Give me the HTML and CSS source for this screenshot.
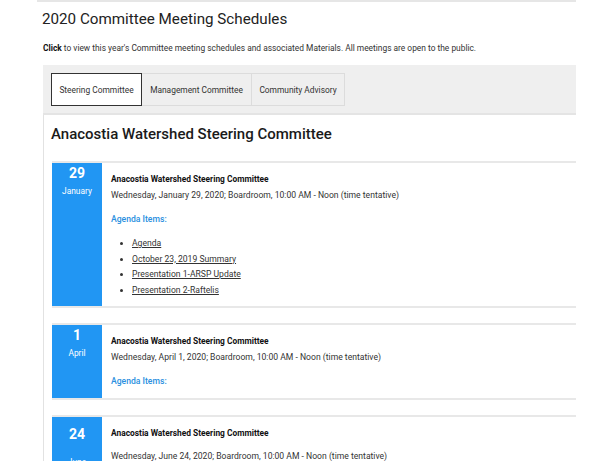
FILE: index.html
```html
<!DOCTYPE html>
<html lang="en">
<head>
<meta charset="utf-8">
<title>2020 Committee Meeting Schedules</title>
<link rel="stylesheet" href="styles.css">
</head>
<body>
<div class="topline"></div>
<main class="wrap">
  <h1 class="page-title">2020 Committee Meeting Schedules</h1>
  <p class="intro"><strong>Click</strong> to view this year's Committee meeting schedules and associated Materials. All meetings are open to the public.</p>

  <div class="tabs">
    <button class="tab tab--active">Steering Committee</button>
    <button class="tab">Management Committee</button>
    <button class="tab">Community Advisory</button>
  </div>

  <section class="panel">
    <h2 class="panel-title">Anacostia Watershed Steering Committee</h2>

    <article class="meeting">
      <div class="date">
        <div class="date-day">29</div>
        <div class="date-month">January</div>
      </div>
      <div class="meeting-body">
        <h3 class="meeting-title">Anacostia Watershed Steering Committee</h3>
        <p class="meeting-when">Wednesday, January 29, 2020; Boardroom, 10:00 AM - Noon (time tentative)</p>
        <p class="agenda-label">Agenda Items:</p>
        <ul class="agenda">
          <li><a href="#">Agenda</a></li>
          <li><a href="#">October 23, 2019 Summary</a></li>
          <li><a href="#">Presentation 1-ARSP Update</a></li>
          <li><a href="#">Presentation 2-Raftelis</a></li>
        </ul>
      </div>
    </article>

    <article class="meeting">
      <div class="date">
        <div class="date-day">1</div>
        <div class="date-month">April</div>
      </div>
      <div class="meeting-body">
        <h3 class="meeting-title">Anacostia Watershed Steering Committee</h3>
        <p class="meeting-when">Wednesday, April 1, 2020; Boardroom, 10:00 AM - Noon (time tentative)</p>
        <p class="agenda-label">Agenda Items:</p>
      </div>
    </article>

    <article class="meeting meeting--spaced">
      <div class="date">
        <div class="date-day">24</div>
        <div class="date-month">June</div>
      </div>
      <div class="meeting-body">
        <h3 class="meeting-title">Anacostia Watershed Steering Committee</h3>
        <p class="meeting-when">Wednesday, June 24, 2020; Boardroom, 10:00 AM - Noon (time tentative)</p>
        <p class="agenda-label">Agenda Items:</p>
      </div>
    </article>
  </section>
</main>
</body>
</html>
```
FILE: styles.css
```css
* {
  box-sizing: border-box;
}

html, body {
  margin: 0;
  padding: 0;
  background: #fff;
  overflow: hidden;
}

body {
  font-family: Roboto, "Liberation Sans", Arial, sans-serif;
  color: #333;
  height: 461px;
}

.topline {
  height: 2px;
  margin-left: 37px;
  width: 539px;
  background: #e6e6e6;
}

.wrap {
  margin-left: 43px;
  width: 533px;
}

.page-title {
  margin: 7px 0 0 -1px;
  font-size: 15.2px;
  line-height: 20px;
  font-weight: 400;
  color: #222;
}

.intro {
  margin: 13px 0 0;
  font-size: 8.4px;
  line-height: 12px;
  color: #333;
}

.intro strong {
  color: #111;
}

.tabs {
  margin-top: 11px;
  display: flex;
  padding: 8px 8px 7px;
  background: #efefef;
  border-bottom: 2px solid #e4e4e4;
}

.tab {
  font-family: inherit;
  font-size: 8.4px;
  color: #333;
  height: 33px;
  padding: 0;
  white-space: nowrap;
  background: #efefef;
  border: 1px solid #dcdcdc;
  border-left: none;
  cursor: pointer;
}

.tab:first-child {
  border-left: 1px solid #dcdcdc;
}

.tab:nth-child(1) { width: 91px; }
.tab:nth-child(2) { width: 110px; }
.tab:nth-child(3) { width: 93px; }

.tab--active,
.tab--active:first-child {
  background: #fff;
  border: 1px solid #333;
}

.panel {
  border-left: 1px solid #e2e2e2;
  padding: 0 0 0 8px;
  min-height: 400px;
}

.panel-title {
  margin: 0 0 0 -1px;
  padding-top: 9px;
  font-size: 15px;
  line-height: 20px;
  font-weight: 500;
  color: #1a1a1a;
}

.meeting {
  display: flex;
  margin-top: 15px;
  border-top: 2px solid #e8e8e8;
  border-bottom: 2px solid #e8e8e8;
}

.meeting:first-of-type {
  margin-top: 17px;
}

.date {
  width: 50px;
  flex: none;
  background: #2196f3;
  color: #fff;
  text-align: center;
  padding-top: 3px;
}

.date-day {
  font-size: 14px;
  line-height: 14px;
  font-weight: 700;
}

.date-month {
  margin-top: 4px;
  font-size: 8.4px;
  line-height: 15.5px;
}

.meeting-body {
  flex: 1;
  padding: 9px 0 8px 9px;
  font-size: 8.6px;
  line-height: 15.5px;
}

.meeting-title {
  margin: 0;
  font-size: 8.4px;
  font-weight: 700;
  color: #111;
}

.meeting-when {
  margin: 0;
  color: #333;
}

.agenda-label {
  margin: 9px 0 0;
  color: #2a8fe0;
  font-weight: 500;
}

.agenda {
  margin: 8.5px 0 0;
  padding-left: 21px;
}

.agenda a {
  color: #333;
  text-decoration: underline;
}

.meeting--spaced .date {
  padding-top: 10px;
}

.meeting--spaced .date-month {
  margin-top: 14px;
}

.meeting--spaced .meeting-when {
  margin-top: 8px;
}
```
